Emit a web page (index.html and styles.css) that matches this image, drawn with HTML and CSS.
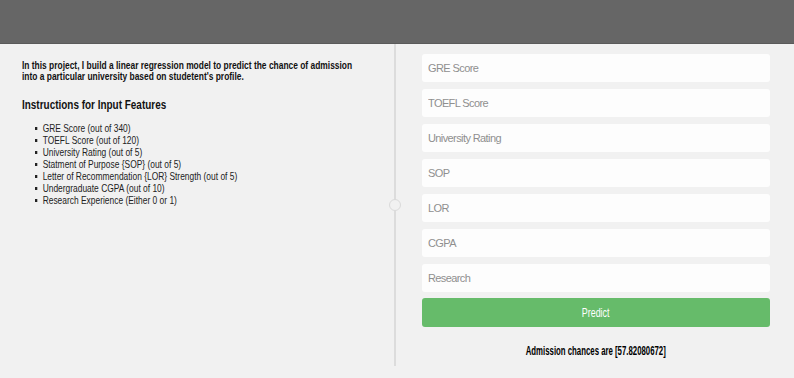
FILE: index.html
```html
<!DOCTYPE html>
<html>
<head>
<meta charset="utf-8">
<link rel="stylesheet" href="styles.css">
</head>
<body>
<header class="topbar"></header>
<main class="main">
  <section class="info">
    <div class="info-text">
      <p class="intro">In this project, I build a linear regression model to predict the chance of admission into a particular university based on studetent's profile.</p>
      <h2 class="heading">Instructions for Input Features</h2>
      <ul class="features">
        <li>GRE Score (out of 340)</li>
        <li>TOEFL Score (out of 120)</li>
        <li>University Rating (out of 5)</li>
        <li>Statment of Purpose {SOP} (out of 5)</li>
        <li>Letter of Recommendation {LOR} Strength (out of 5)</li>
        <li>Undergraduate CGPA (out of 10)</li>
        <li>Research Experience (Either 0 or 1)</li>
      </ul>
    </div>
  </section>
  <div class="divider"><span class="knob"></span></div>
  <section class="formcol">
    <form class="form">
      <input class="field" type="text" placeholder="GRE Score">
      <input class="field" type="text" placeholder="TOEFL Score">
      <input class="field" type="text" placeholder="University Rating">
      <input class="field" type="text" placeholder="SOP">
      <input class="field" type="text" placeholder="LOR">
      <input class="field" type="text" placeholder="CGPA">
      <input class="field" type="text" placeholder="Research">
      <button class="predict" type="button"><span class="narrow">Predict</span></button>
    </form>
    <p class="result"><span class="narrow">Admission chances are [57.82080672]</span></p>
  </section>
</main>
</body>
</html>
```
FILE: styles.css
```css
* { box-sizing: border-box; }
html, body { margin: 0; padding: 0; }
body {
  background: #f1f1f1;
  font-family: "Liberation Sans", Arial, sans-serif;
  color: #111;
  width: 794px;
  height: 378px;
  overflow: hidden;
}
.topbar {
  height: 44px;
  background: #666666;
  border-bottom: 1px solid #5a5a5a;
}
.main {
  display: flex;
  align-items: stretch;
  height: 322px;
}
.info {
  width: 394px;
  padding: 16px 0 0 22px;
}
.info-text {
  width: 460px;
  transform: scaleX(0.765);
  transform-origin: left top;
}
.intro {
  margin: 0;
  font-weight: bold;
  font-size: 11px;
  line-height: 11px;
  width: 440px;
}
.heading {
  margin: 15px 0 0;
  font-size: 13px;
  line-height: 15px;
  font-weight: bold;
}
.features {
  margin: 10px 0 0;
  padding-left: 27px;
  font-size: 11px;
  line-height: 12px;
  color: #222;
  list-style: none;
}
.features li { position: relative; }
.features li::before {
  content: "";
  position: absolute;
  left: -10px;
  top: 5px;
  width: 3px;
  height: 3px;
  background: #222;
}
.divider {
  position: relative;
  width: 2px;
  background: #dcdcdc;
}
.knob {
  position: absolute;
  left: -5px;
  top: 155px;
  width: 12px;
  height: 12px;
  border-radius: 50%;
  background: #f1f1f1;
  border: 1px solid #dadada;
}
.formcol {
  width: 348px;
  margin-left: 26px;
  padding-top: 10px;
}
.form {
  display: flex;
  flex-direction: column;
  gap: 7px;
}
.field {
  height: 28px;
  border: none;
  border-radius: 3px;
  background: #fdfdfd;
  padding: 0 6px;
  font-family: "Liberation Sans", Arial, sans-serif;
  font-size: 11px;
  letter-spacing: -0.6px;
  outline: none;
}
.field::placeholder { color: #8f8f8f; }
.predict {
  margin-top: -1px;
  height: 29px;
  border: none;
  border-radius: 3px;
  background: #66bb6a;
  color: #fff;
  font-family: "Liberation Sans", Arial, sans-serif;
  font-size: 12px;
}
.narrow {
  display: inline-block;
  transform: scaleX(0.74);
  transform-origin: center;
}
.result {
  margin: 17px 0 0;
  text-align: center;
  font-weight: bold;
  font-size: 12px;
  color: #000;
}
.result .narrow { transform: scaleX(0.65); }
```
